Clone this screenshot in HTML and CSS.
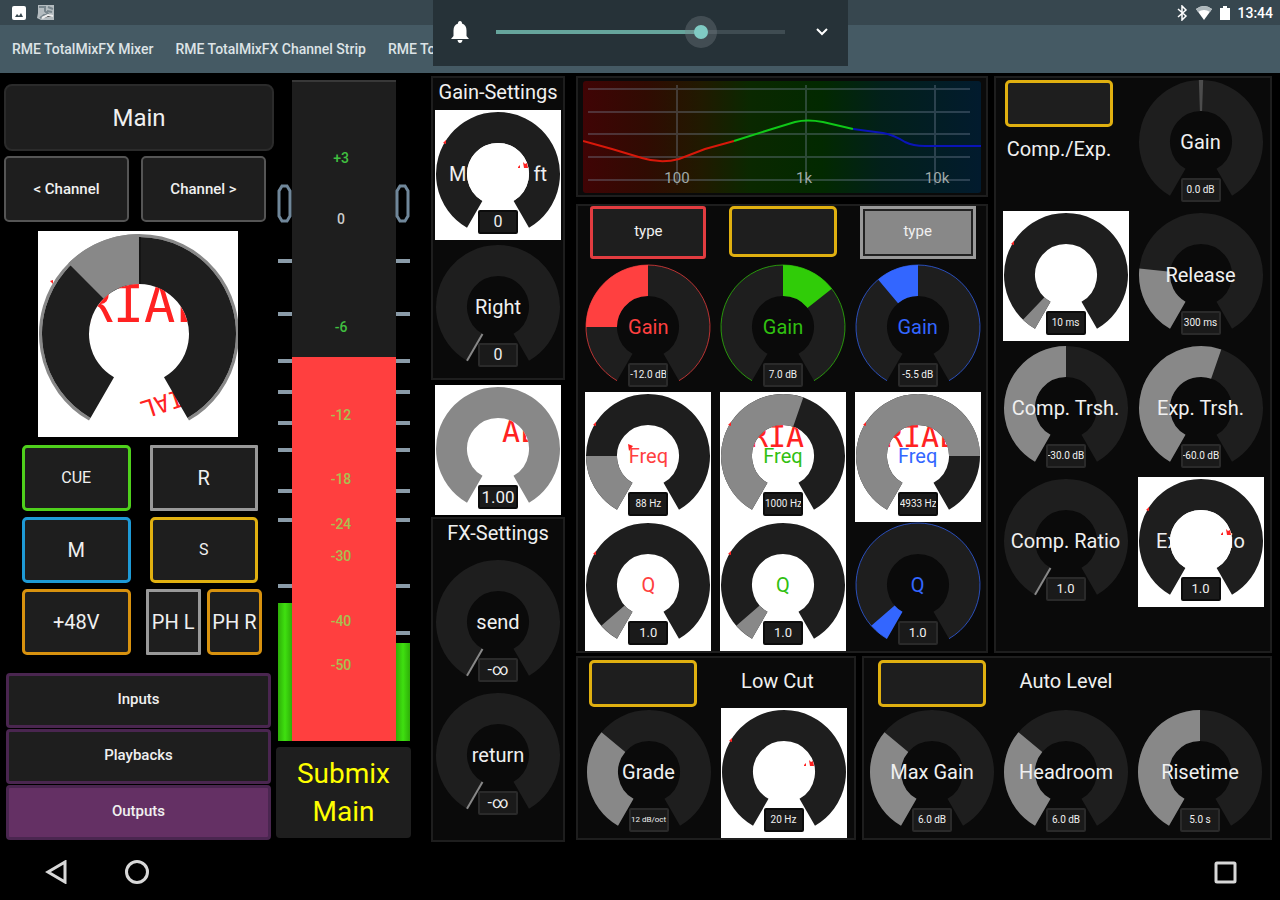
FILE: index.html
```html
<!DOCTYPE html>
<html lang="en">
<head>
<meta charset="utf-8">
<meta name="viewport" content="width=device-width, initial-scale=1">
<title>RME TotalMixFX Channel Strip</title>
<link rel="stylesheet" href="styles.css">
</head>
<body>
<svg class="defs" width="0" height="0" aria-hidden="true">
  <defs>
    <path id="arc" pathLength="300" d="M39.75 104.27A46.5 46.5 0 1 1 86.25 104.27"/>
    <path id="rim" d="M32 117.7A62 62 0 1 1 94 117.7"/>
    <path id="needle" d="M47.5 91L32 117.7"/>
    <path id="speck" d="M8 33l3-3v4z"/>
    <path id="marks" d="M83 57l2-2v3h-2zM88 52l2 2 2-1 1 5h-4z"/>
    <clipPath id="hub"><circle cx="63" cy="64" r="31"/></clipPath>
  </defs>
</svg>

<header class="statusbar">
  <svg width="44" height="16" viewBox="0 0 44 16" aria-hidden="true">
    <rect x="0" y="1" width="14" height="14" rx="2" fill="#fff"/><path d="M3 12l2-3 2 2 2-3 2 4z" fill="#37474f"/>
    <path d="M26 0h16v15H29l-4-2 1-5z" fill="#b4bcc0"/><path d="M27 2h6v4l4 4h-5l-4 3M36 2l5 2M35 6l5 1" stroke="#78868d" stroke-width="2" fill="none"/><path d="M30 13l6-3 5 1" stroke="#eee" stroke-width="2"/>
  </svg>
  <div class="status-right">
    <svg width="54" height="16" viewBox="0 0 54 16" aria-hidden="true">
      <path d="M1 4l8 7-4 4V1l4 4-8 7" fill="none" stroke="#fff" stroke-width="1.5"/>
      <path d="M19 4q8-6 16 0l-8 11z" fill="#fff"/><path d="M19 4q8-6 16 0l-2 3q-6-4-12 0z" fill="#aeb8bc"/>
      <path d="M43 3h3V1h4v2h3v12H43z" fill="#fff"/>
    </svg>
    <time>13:44</time>
  </div>
</header>
<nav class="tabs">
  <a href="#mixer">RME TotalMixFX Mixer</a>
  <a href="#strip">RME TotalMixFX Channel Strip</a>
  <a href="#more">RME TotalMixFX</a>
</nav>

<section class="volume" aria-label="Volume">
  <svg width="20" height="22" viewBox="0 0 20 22" aria-hidden="true"><path d="M10 0c1.500 0 2 1 2 2.500 3 1 4.500 3.500 4.500 7V15l2.500 3H1l2.500-3V9.500c0-3.500 1.500-6 4.500-7C8 1 8.500 0 10 0zM7.500 19h5q-.5 3-2.500 3t-2.500-3z" fill="#fff"/></svg>
  <input type="range" min="0" max="100" value="72" aria-label="Ring volume">
  <button class="expand" aria-label="Expand"><svg width="12" height="8" viewBox="0 0 12 8"><path d="M1 1l5 5 5-5" fill="none" stroke="#fff" stroke-width="2"/></svg></button>
</section>

<main class="console">
  <section class="strip">
    <h1 class="channel-name">Main</h1>
    <div class="pair wide">
      <button class="key step">&lt; Channel</button>
      <button class="key step">Channel &gt;</button>
    </div>
    <svg class="pan" viewBox="0 0 200 206" role="img" aria-label="Pan">
      <defs><clipPath id="panhub"><circle cx="101" cy="103" r="50"/></clipPath></defs>
      <rect width="200" height="206" fill="#fff"/>
      <text x="0" y="0" class="glitch mid" transform="translate(142 158) rotate(162)">IAL</text>
      <g fill="none">
        <path d="M51.750 188.300A98.500 98.500 0 1 1 150.250 188.300" stroke="#888" stroke-width="3"/>
        <path d="M64.250 166.650A73.500 73.500 0 1 1 137.750 166.650" stroke="#1e1e1e" stroke-width="47"/>
        <path d="M48 50A75 75 0 0 1 101 28" stroke="#888" stroke-width="50"/>
        <path d="M102 6v47" stroke="#0a0a0a"/>
      </g>
      <text x="106" y="91" text-anchor="middle" class="glitch big" clip-path="url(#panhub)">RIAL</text>
      <path d="M12 50l3-1v4z" fill="#f22"/>
    </svg>
    <div class="pair">
      <button class="key green small">CUE</button>
      <button class="key silver">R</button>
      <button class="key blue">M</button>
      <button class="key yellow small">S</button>
      <button class="key orange">+48V</button>
      <div class="phones">
        <button class="key silver">PH L</button>
        <button class="key orange">PH R</button>
      </div>
    </div>
    <div class="banks">
      <button class="bank">Inputs</button>
      <button class="bank">Playbacks</button>
      <button class="bank active">Outputs</button>
    </div>
  </section>

  <section class="fader">
    <svg class="meter" viewBox="0 0 137 662" role="img" aria-label="Submix level">
      <defs><linearGradient id="level" x1="0" x2="1"><stop offset="0" stop-color="#2eae08"/><stop offset=".5" stop-color="#3fe010"/><stop offset="1" stop-color="#2eae08"/></linearGradient></defs>
      <rect x="17" y="0" width="104" height="277" fill="#1e1e1e"/><path d="M17 1h104" stroke="#383838" stroke-width="2"/>
      <g stroke="#8a9ba8" stroke-width="4">
        <path d="M3 181h14M3 234h14M3 281h14M3 312h14M3 343h14M3 370h14M3 411h14M3 440h14M3 506h14"/>
        <path d="M121 181h14M121 234h14M121 281h14M121 312h14M121 343h14M121 370h14M121 411h14M121 440h14M121 506h14M121 553h14"/>
      </g>
      <g fill="none" stroke="#70879a" stroke-width="3"><path d="M7 106h5l3 5v25l-3 5H7l-3-5v-25zM125 106h5l3 5v25l-3 5h-5l-3-5v-25z"/></g>
      <rect x="3" y="523" width="14" height="138" fill="url(#level)"/><rect x="121" y="563" width="14" height="98" fill="url(#level)"/>
      <rect x="17" y="277" width="104" height="384" fill="#ff3f3f"/>
      <g class="scale" text-anchor="middle">
        <text x="66" y="83" class="low">+3</text><text x="66" y="144" class="zero">0</text><text x="66" y="252" class="low">-6</text>
        <text x="66" y="340">-12</text><text x="66" y="404">-18</text><text x="66" y="449">-24</text><text x="66" y="481">-30</text><text x="66" y="546">-40</text><text x="66" y="590">-50</text>
      </g>
    </svg>
    <div class="submix">Submix<br>Main</div>
  </section>

  <section class="gains">
    <div class="panel input-gain">
      <h2>Gain-Settings</h2>
      <div class="knob light"><svg viewBox="0 0 126 130"><use href="#arc" class="track"/><use href="#speck" class="red"/></svg><span class="label split"><span>M</span><span>ft</span></span><svg viewBox="0 0 126 130"><circle cx="63" cy="64" r="31" fill="#fff"/><use href="#marks" class="red"/></svg><output class="mid">0</output></div>
      <div class="knob"><svg viewBox="0 0 126 130"><use href="#arc" class="track"/><use href="#needle" class="pointer"/></svg><span class="label">Right</span><output class="mid">0</output></div>
    </div>
    <div class="knob light width"><svg viewBox="0 0 126 130"><use href="#arc" class="value"/><text x="67" y="57" class="glitch" clip-path="url(#hub)">AL</text></svg><output class="large">1.00</output></div>
    <div class="panel fx">
      <h2>FX-Settings</h2>
      <div class="knob"><svg viewBox="0 0 126 130"><use href="#arc" class="track"/><use href="#needle" class="pointer"/></svg><span class="label">send</span><output class="mid">-∞</output></div>
      <div class="knob"><svg viewBox="0 0 126 130"><use href="#arc" class="track"/><use href="#needle" class="pointer"/></svg><span class="label">return</span><output class="mid">-∞</output></div>
    </div>
  </section>

  <section class="process">
    <div class="row upper">
      <div class="eq">
        <div class="panel graph">
          <svg viewBox="0 0 398 112" role="img" aria-label="EQ curve">
            <defs><linearGradient id="bands"><stop offset="0" stop-color="#400405"/><stop offset=".16" stop-color="#300b02"/><stop offset=".3" stop-color="#201a00"/><stop offset=".42" stop-color="#0a2800"/><stop offset=".6" stop-color="#022900"/><stop offset=".75" stop-color="#02201a"/><stop offset="1" stop-color="#021b2e"/></linearGradient></defs>
            <rect width="398" height="112" rx="3" fill="url(#bands)"/>
            <path d="M5 8h382M5 31h382M5 53h382M5 76h382M5 99h382M94 4v100M223 4v100M352 4v100" stroke="#78889a" stroke-opacity=".35" stroke-width="2"/>
            <g fill="none" stroke-width="2"><path d="M0 60L29 68L59 77Q78 83 96 78L122 68L151 60" stroke="#d8180a"/><path d="M151 60L189 48L212 41Q224 38 240 41L270 48" stroke="#10c818"/><path d="M270 48L300 52Q311 54 322 61Q330 65 342 65H398" stroke="#0a14b8"/></g>
            <g class="freqs" text-anchor="middle"><text x="94" y="102">100</text><text x="221" y="102">1k</text><text x="354" y="102">10k</text></g>
          </svg>
        </div>
        <div class="panel bands">
          <button class="key type red">type</button>
          <button class="key yellow toggle" aria-label="EQ on"></button>
          <button class="key type filled">type</button>

          <div class="knob c-red"><svg viewBox="0 0 126 130"><use href="#arc" class="track"/><use href="#rim" class="rim"/><use href="#arc" class="value" stroke-dasharray="0 60 90 300"/></svg><span class="label">Gain</span><output>-12.0 dB</output></div>
          <div class="knob c-green"><svg viewBox="0 0 126 130"><use href="#arc" class="track"/><use href="#rim" class="rim"/><use href="#arc" class="value" stroke-dasharray="0 150 52 300"/></svg><span class="label">Gain</span><output>7.0 dB</output></div>
          <div class="knob c-blue"><svg viewBox="0 0 126 130"><use href="#arc" class="track"/><use href="#rim" class="rim"/><use href="#arc" class="value" stroke-dasharray="0 110 40 300"/></svg><span class="label">Gain</span><output>-5.5 dB</output></div>

          <div class="knob light c-red"><svg viewBox="0 0 126 130"><use href="#arc" class="track"/><use href="#arc" class="value" stroke-dasharray="60 300"/><use href="#speck" class="red"/><path d="M43 52l5 2-4 5z" class="red"/></svg><span class="label">Freq</span><output>88 Hz</output></div>
          <div class="knob light c-green"><svg viewBox="0 0 126 130"><use href="#arc" class="track"/><use href="#arc" class="value" stroke-dasharray="169 300"/><use href="#speck" class="red"/><text x="57" y="55" text-anchor="middle" class="glitch" clip-path="url(#hub)">RIA</text></svg><span class="label">Freq</span><output>1000 Hz</output></div>
          <div class="knob light c-blue"><svg viewBox="0 0 126 130"><use href="#arc" class="track"/><use href="#arc" class="value" stroke-dasharray="240 300"/><use href="#speck" class="red"/><text x="66" y="55" text-anchor="middle" class="glitch" clip-path="url(#hub)">RIAL</text></svg><span class="label">Freq</span><output>4933 Hz</output></div>

          <div class="knob light c-red"><svg viewBox="0 0 126 130"><use href="#arc" class="track"/><use href="#arc" class="value" stroke-dasharray="19 300"/><use href="#speck" class="red"/></svg><span class="label">Q</span><output class="unit">1.0</output></div>
          <div class="knob light c-green"><svg viewBox="0 0 126 130"><use href="#arc" class="track"/><use href="#arc" class="value" stroke-dasharray="19 300"/><use href="#speck" class="red"/></svg><span class="label">Q</span><output class="unit">1.0</output></div>
          <div class="knob c-blue"><svg viewBox="0 0 126 130"><use href="#arc" class="track"/><use href="#rim" class="rim"/><use href="#arc" class="value" stroke-dasharray="19 300"/></svg><span class="label">Q</span><output class="unit">1.0</output></div>
        </div>
      </div>

      <div class="panel dynamics">
        <div class="switch"><button class="key yellow toggle" aria-labelledby="comp-title"></button><h2 id="comp-title">Comp./Exp.</h2></div>
        <div class="knob"><svg viewBox="0 0 126 130"><use href="#arc" class="track"/><use href="#arc" class="value dim" stroke-dasharray="0 148 4 300"/></svg><span class="label">Gain</span><output>0.0 dB</output></div>
        <div class="knob light"><svg viewBox="0 0 126 130"><use href="#arc" class="track"/><use href="#arc" class="value" stroke-dasharray="14 300"/><use href="#speck" class="red"/></svg><output>10 ms</output></div>
        <div class="knob"><svg viewBox="0 0 126 130"><use href="#arc" class="track"/><use href="#arc" class="value" stroke-dasharray="66 300"/></svg><span class="label">Release</span><output>300 ms</output></div>
        <div class="knob"><svg viewBox="0 0 126 130"><use href="#arc" class="track"/><use href="#arc" class="value" stroke-dasharray="150 300"/></svg><span class="label">Comp. Trsh.</span><output>-30.0 dB</output></div>
        <div class="knob"><svg viewBox="0 0 126 130"><use href="#arc" class="track"/><use href="#arc" class="value" stroke-dasharray="169 300"/></svg><span class="label">Exp. Trsh.</span><output>-60.0 dB</output></div>
        <div class="knob"><svg viewBox="0 0 126 130"><use href="#arc" class="track"/><use href="#needle" class="pointer"/></svg><span class="label">Comp. Ratio</span><output class="unit">1.0</output></div>
        <div class="knob light"><svg viewBox="0 0 126 130"><use href="#arc" class="track"/><use href="#speck" class="red"/></svg><span class="label">Exp. Ratio</span><svg viewBox="0 0 126 130"><circle cx="63" cy="64" r="31" fill="#fff"/><use href="#marks" class="red"/></svg><output class="unit">1.0</output></div>
      </div>
    </div>

    <div class="row lower">
      <div class="panel lowcut">
        <button class="key yellow toggle" aria-labelledby="cut-title"></button>
        <h2 id="cut-title">Low Cut</h2>
        <div class="knob"><svg viewBox="0 0 126 130"><use href="#arc" class="track"/><use href="#arc" class="value" stroke-dasharray="100 300"/></svg><span class="label">Grade</span><output class="tiny">12 dB/oct</output></div>
        <div class="knob light"><svg viewBox="0 0 126 130"><use href="#arc" class="track"/><use href="#speck" class="red"/><use href="#marks" class="red"/></svg><output>20 Hz</output></div>
      </div>
      <div class="panel autolevel">
        <button class="key yellow toggle" aria-labelledby="auto-title"></button>
        <h2 id="auto-title">Auto Level</h2>
        <span></span>
        <div class="knob"><svg viewBox="0 0 126 130"><use href="#arc" class="track"/><use href="#arc" class="value" stroke-dasharray="100 300"/></svg><span class="label">Max Gain</span><output>6.0 dB</output></div>
        <div class="knob"><svg viewBox="0 0 126 130"><use href="#arc" class="track"/><use href="#arc" class="value" stroke-dasharray="100 300"/></svg><span class="label">Headroom</span><output>6.0 dB</output></div>
        <div class="knob"><svg viewBox="0 0 126 130"><use href="#arc" class="track"/><use href="#arc" class="value" stroke-dasharray="150 300"/></svg><span class="label">Risetime</span><output>5.0 s</output></div>
      </div>
    </div>
  </section>
</main>

<footer class="navbar">
  <button aria-label="Back"><svg width="24" height="24" viewBox="0 0 24 24"><path d="M20 2v20L3 12z"/></svg></button>
  <button aria-label="Home"><svg width="24" height="24" viewBox="0 0 24 24"><circle cx="12" cy="12" r="10.500"/></svg></button>
  <button class="recent" aria-label="Recent apps"><svg width="24" height="24" viewBox="0 0 24 24"><rect x="3" y="3" width="19" height="19" rx="1"/></svg></button>
</footer>
</body>
</html>
```

FILE: styles.css
```css
* { box-sizing: border-box; }
body {
  margin: 0;
  min-height: 100vh;
  display: flex;
  flex-direction: column;
  background: #000;
  color: #f0f0f0;
  font-family: Roboto, "Liberation Sans", sans-serif;
  font-size: 20px;
  line-height: 24px;
  position: relative;
}
h1, h2 { margin: 0; font-size: 20px; font-weight: 400; text-align: center; }
button { font: inherit; color: inherit; padding: 0; border: 0; background: none; cursor: pointer; }
svg { display: block; }
.defs { position: absolute; }

/* Android bars */
.statusbar {
  height: 25px;
  padding: 0 7px 0 12px;
  display: flex;
  align-items: center;
  justify-content: space-between;
  background: #37474f;
}
.status-right { display: flex; align-items: center; gap: 6px; font-size: 14px; font-weight: 500; color: #fff; }
.tabs {
  height: 48px;
  padding: 0 12px;
  display: flex;
  align-items: center;
  gap: 22px;
  background: #455a64;
  font-size: 14px;
  font-weight: 500;
}
.tabs a { color: #dde3e6; text-decoration: none; white-space: nowrap; }
.volume {
  position: absolute;
  top: 0;
  left: 433px;
  width: 415px;
  height: 66px;
  padding: 0 20px 2px 17px;
  display: flex;
  align-items: center;
  background: #263238;
}
.volume input {
  flex: 1;
  height: 32px;
  margin: 0 31px 0 26px;
  appearance: none;
  background: linear-gradient(90deg, #66a59c 71%, #3f4c52 71%) center / 100% 4px no-repeat;
}
.volume input::-webkit-slider-thumb {
  appearance: none;
  width: 14px;
  height: 14px;
  border-radius: 50%;
  background: #80cbc4;
  box-shadow: 0 0 0 9px rgba(120, 130, 135, .35);
}

/* Console columns */
.console {
  display: grid;
  grid-template-columns: minmax(0, 275fr) minmax(0, 137fr) minmax(0, 164fr) minmax(0, 696fr);
  padding: 3px 8px 0 0;
}
.strip { padding: 8px 1px 0 4px; }
.fader { padding-top: 4px; }
.gains { margin: 0 11px 0 19px; }

.channel-name {
  height: 67px;
  line-height: 64px;
  font-size: 24px;
  background: #1e1e1e;
  border: 2px solid #2b2b2b;
  border-radius: 8px;
}
.key {
  height: 66px;
  background: #1e1e1e;
  border: 3px solid #555;
  border-radius: 5px;
  white-space: nowrap;
}
.key.step { border: 2px solid #555; font-size: 15px; font-weight: 500; }
.key.small { font-size: 16px; }
.key.green { border-color: #4fd01c; }
.key.blue { border-color: #1e9ad6; }
.key.orange { border-color: #d8920f; }
.key.yellow { border-color: #e0b010; }
.key.silver { border-color: #999; border-radius: 1px; }
.key.red { border-color: #e23c40; border-radius: 3px; }
.key.filled { border-color: #999; border-radius: 0; background: #888; box-shadow: inset 0 0 0 2px #222; }
.key.type { width: 116px; height: 53px; font-size: 15px; padding-bottom: 4px; }
.key.toggle { width: 108px; height: 47px; }
.bands .toggle { height: 51px; }

.pair { display: grid; grid-template-columns: 1fr 1fr; gap: 6px 19px; margin: 8px 16px 0 18px; }
.pair.wide { gap: 12px; margin: 5px 8px 0 0; }
.phones { display: grid; grid-template-columns: 1fr 1fr; gap: 6px; margin: 0 -4px; }
.pan { width: 200px; height: 206px; margin: 9px 0 0 34px; }
.banks { display: grid; gap: 1px; margin: 18px 3px 0 2px; }
.bank {
  height: 55px;
  background: #1e1e1e;
  border: 3px solid #4a2650;
  border-radius: 4px;
  font-size: 15px;
  font-weight: 500;
  padding-bottom: 4px;
}
.bank.active { background: #643064; }

.meter { width: 100%; }
.scale { font-size: 14px; font-weight: 500; fill: #a8c050; }
.scale .low { fill: #40c040; }
.scale .zero { fill: #ccc; }
.submix {
  height: 91px;
  margin: 5px 1px 0;
  padding-top: 8px;
  border-radius: 4px;
  background: #1e1e1e;
  color: #ff0;
  font-size: 28px;
  line-height: 38px;
  text-align: center;
}

/* Panels */
.panel { background: #0a0a0a; border: 2px solid #1e1e1e; }
.input-gain { height: 304px; padding-top: 2px; }
.input-gain h2 { margin: 0 -2px 6px; white-space: nowrap; }
.input-gain .knob + .knob { margin-top: 3px; }
.fx { height: 325px; padding-top: 2px; }
.fx h2 { margin-bottom: 13px; }
.fx .knob { margin-bottom: 3px; }

.row { display: grid; column-gap: 6px; }
.upper { grid-template-columns: minmax(0, 412fr) minmax(0, 278fr); }
.lower { grid-template-columns: minmax(0, 280fr) minmax(0, 410fr); margin-top: 3px; }
.graph { height: 121px; padding: 3px 5px; }
.graph svg { width: 100%; height: 112px; }
.freqs { font-size: 15px; fill: #a0aaa8; }
.bands {
  height: 449px;
  margin-top: 7px;
  padding: 0 1px 0 3px;
  display: grid;
  grid-template-columns: repeat(3, 1fr);
  grid-template-rows: 57px 129px 129px 129px;
  justify-items: center;
}
.dynamics {
  padding: 0 2px;
  display: grid;
  grid-template-columns: 1fr 1fr;
  grid-auto-rows: 133px;
  justify-items: center;
}
.switch { padding-top: 2px; margin-left: -13px; }
.switch h2 { margin-top: 8px; }
.lower .panel { height: 184px; display: grid; grid-template-rows: 50px 130px; justify-items: center; }
.lower .toggle { margin-top: 2px; }
.lowcut .toggle, .lowcut h2 { margin-right: 12px; }
.lower h2 { margin-top: 11px; }
.lowcut { grid-template-columns: 1fr 1fr; padding: 0 3px; }
.autolevel { grid-template-columns: repeat(3, 1fr); padding: 0 3px 0 1px; }

/* Knobs: dial, caption and read-out share one grid cell */
.knob { display: grid; width: 126px; height: 130px; margin: 0 auto; --tint: #888; --caption: #f0f0f0; }
.knob > * { grid-area: 1 / 1; }
.knob svg { width: 126px; height: 130px; }
.knob.light { background: #fff; }
.knob.width { margin: 5px auto 2px; }
.track, .value { fill: none; stroke: #1e1e1e; stroke-width: 31px; }
.value { stroke: var(--tint); }
.value.dim { stroke: #4c4c4c; }
.rim { fill: none; stroke: var(--tint); stroke-width: 1px; opacity: .7; }
.pointer { stroke: #888; stroke-width: 2px; }
.red { fill: #f22; }
.c-red { --tint: #ff4040; --caption: #ff4040; }
.c-green { --tint: #30cc08; --caption: #30c010; }
.c-blue { --tint: #3366ff; --caption: #3366ff; }
.light { --tint: #888; }
.label { align-self: center; justify-self: center; margin-bottom: 3px; white-space: nowrap; color: var(--caption); }
.label.split { width: 98px; display: flex; justify-content: space-between; }
.knob output {
  align-self: end;
  justify-self: center;
  width: 40px;
  height: 24px;
  margin-bottom: 6px;
  overflow: hidden;
  background: #1a1a1a;
  border: 2px solid #2a2a2a;
  border-radius: 2px;
  font-size: 10px;
  line-height: 20px;
  text-align: center;
  white-space: nowrap;
}
.knob.light output { border-color: #0c0c0c; }
.knob output.unit { font-size: 13px; }
.knob output.mid { font-size: 16px; }
.knob output.large { font-size: 17px; }
.knob output.tiny { font-size: 8px; }
.glitch { fill: #f22; font: 30px "DejaVu Sans Mono", monospace; }
.glitch.big { font-size: 52px; }
.glitch.mid { font-size: 24px; }

.light.c-red, .light.c-green, .light.c-blue { --tint: #888; }

.navbar { flex: 1; display: flex; align-items: center; gap: 56px; padding: 2px 43px 0 45px; }
.navbar svg { fill: none; stroke: #d8d8d8; stroke-width: 3px; }
.recent { margin-left: auto; }
```
